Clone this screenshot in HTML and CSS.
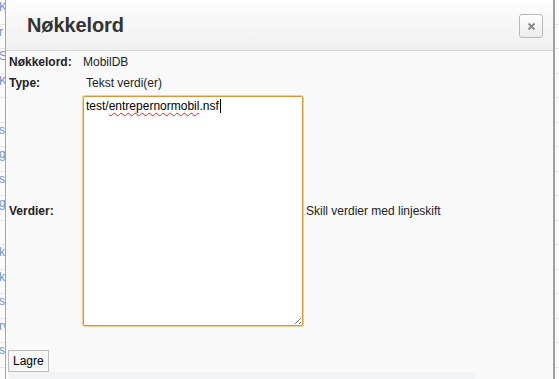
FILE: index.html
```html
<!DOCTYPE html>
<html>
<head>
<meta charset="utf-8">
<link rel="stylesheet" href="styles.css">
</head>
<body>
<div class="page">
  <ul class="bglist">
    <li>K</li><li>r</li><li>S</li><li>K</li><li>&nbsp;</li><li>s</li><li>g</li><li>s</li><li>g</li><li>&nbsp;</li><li>k</li><li>k</li><li>s</li><li>rv</li><li>s</li>
  </ul>
</div>
<div class="modal">
  <div class="modal-header">
    <h3 class="title">Nøkkelord</h3>
    <button class="close" aria-label="Lukk">
      <svg width="9" height="9" viewBox="0 0 9 9"><path d="M1.5 1.5 L7.5 7.5 M7.5 1.5 L1.5 7.5" stroke="#8a8a8a" stroke-width="1.9"/></svg>
    </button>
  </div>
  <div class="modal-body">
    <table class="form">
      <tr class="r1"><th>Nøkkelord:</th><td>MobilDB</td><td></td></tr>
      <tr class="r2"><th>Type:</th><td><span class="type">Tekst verdi(er)</span></td><td></td></tr>
      <tr class="r3"><th>Verdier:</th><td><div class="values" role="textbox">test/<span class="misspelled">entrepernormobil</span>.nsf<span class="caret"></span><span class="grip"></span></div></td><td class="hint">Skill verdier med linjeskift</td></tr>
    </table>
    <button class="save">Lagre</button>
    <div class="strip"></div>
  </div>
</div>
</body>
</html>
```
FILE: styles.css
```css
html, body {
  margin: 0;
  padding: 0;
  width: 559px;
  height: 379px;
  overflow: hidden;
  background: #fbfbfb;
  font-family: "Liberation Sans", Arial, sans-serif;
}
.page {
  width: 559px;
  height: 379px;
}
.bglist {
  list-style: none;
  margin: 0;
  padding: 0;
}
.bglist li {
  height: 23.5px;
  line-height: 15px;
  border-bottom: 1px solid #e4e6ea;
  color: #6f93cf;
  font-size: 12px;
  padding-left: 0;
  margin-left: -1px;
}
.modal {
  position: absolute;
  left: 5px;
  top: -6px;
  width: 550px;
  height: 390px;
  background: #f9f9f9;
  border-left: 1px solid #a4a4a4;
  border-right: 2px solid #a0a0a0;
  border-top: 1px solid #a0a0a0;
  box-sizing: border-box;
}
.modal-header {
  height: 56px;
  box-sizing: border-box;
  border-bottom: 1px solid #d8d8d8;
  background: linear-gradient(#ffffff, #efefef);
  display: flex;
  align-items: center;
  justify-content: space-between;
  padding: 6px 10px 0 21px;
}
.title {
  margin: 0;
  font-size: 20px;
  font-weight: bold;
  color: #333;
  letter-spacing: -0.1px;
}
.close {
  width: 24px;
  height: 24px;
  border: 1px solid #b9b9b9;
  border-radius: 3px;
  background: linear-gradient(#ffffff, #ececec);
  padding: 0;
  display: flex;
  align-items: center;
  justify-content: center;
  margin-top: 1px;
}
.modal-body {
  padding: 0 0 0 2px;
}
.form {
  border-collapse: collapse;
  font-size: 12px;
  color: #222;
}
.form th {
  text-align: left;
  font-weight: bold;
  width: 74px;
  padding: 0 0 0 1px;
  color: #222;
}
.form td {
  padding: 0;
}
.r1, .r2 {
  height: 21px;
}
.type {
  padding-left: 3px;
}
.r3 td {
  padding-top: 3px;
  padding-bottom: 3px;
}
.values {
  position: relative;
  width: 220px;
  height: 230px;
  box-sizing: border-box;
  border: 1px solid #d39a36;
  box-shadow: 0 0 0 1px #efcf93;
  border-radius: 2px;
  background: #fff;
  font-size: 12px;
  line-height: 15px;
  color: #000;
  padding: 2px 2px;
}
.misspelled {
  text-decoration: underline wavy #e02020;
  text-decoration-thickness: 1px;
  text-underline-offset: 2px;
}
.caret {
  display: inline-block;
  width: 1px;
  height: 14px;
  background: #000;
  vertical-align: -3px;
  margin-left: 1px;
}
.grip {
  position: absolute;
  right: 1px;
  bottom: 1px;
  width: 9px;
  height: 9px;
  background: repeating-linear-gradient(135deg, transparent 0 2px, #777 2px 3px);
  clip-path: polygon(100% 0, 100% 100%, 0 100%);
}
.hint {
  padding-left: 3px !important;
  vertical-align: middle;
}
.save {
  margin: 21px 0 0 0;
  height: 22px;
  padding: 0 4px;
  font-family: "Liberation Sans", Arial, sans-serif;
  font-size: 12px;
  color: #000;
  background: #f7f7f7;
  border: 1px solid #bcbcbc;
  display: block;
}
.strip {
  width: 466px;
  height: 10px;
  background: #f2f3f5;
  margin-left: 1px;
}
```
